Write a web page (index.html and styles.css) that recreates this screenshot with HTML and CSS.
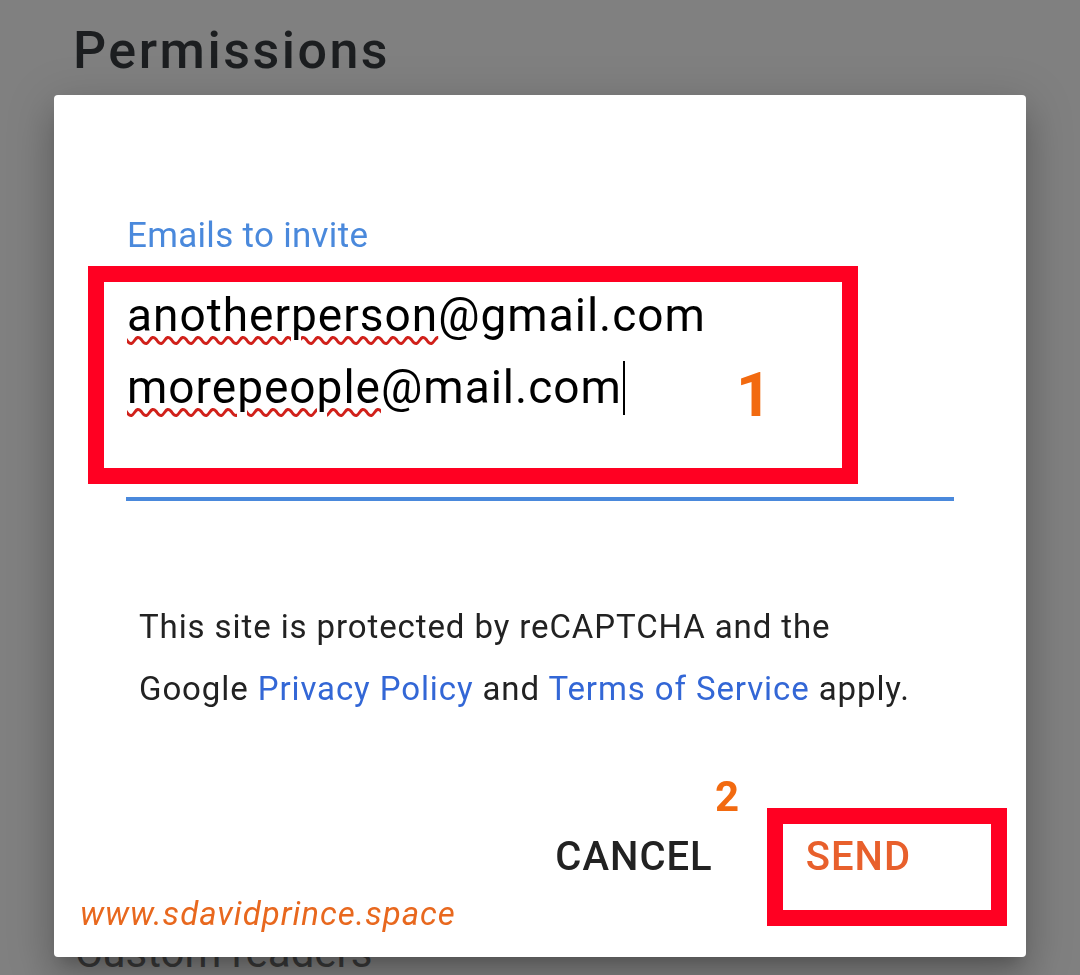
FILE: index.html
```html
<!DOCTYPE html>
<html lang="en">
<head>
<meta charset="UTF-8">
<title>Permissions - Invite readers</title>
<link rel="stylesheet" href="styles.css">
</head>
<body>

<main class="page">
  <h1 class="page-title">Permissions</h1>
  <section class="page-body"></section>
  <h2 class="section-title">Custom readers</h2>
</main>

<div class="backdrop"></div>

<div class="dialog">
  <div class="field">
    <label class="field-label" for="emails">Emails to invite</label>
    <div class="field-input" id="emails">
      <div class="email-line"><span class="misspelled">anotherperson</span>@gmail.com</div>
      <div class="email-line"><span class="misspelled">morepeople</span>@mail.com<span class="caret"></span></div>
      <!-- annotation 1 -->
      <div class="mark-box mark-box-field"></div>
      <div class="step-num step-one">1</div>
    </div>
  </div>

  <p class="recaptcha">
    This site is protected by reCAPTCHA and the<br>
    Google <a href="#">Privacy Policy</a> and <a href="#">Terms of Service</a> apply.
  </p>

  <div class="actions">
    <div class="step-num step-two">2</div>
    <button class="btn btn-cancel">CANCEL</button>
    <button class="btn btn-send">SEND
      <span class="mark-box mark-box-send"></span>
    </button>
  </div>

  <div class="watermark">www.sdavidprince.space</div>
</div>

</body>
</html>
```

FILE: styles.css
```css
* { margin: 0; padding: 0; box-sizing: border-box; }
body { font-family: Roboto, "Noto Sans", Arial, sans-serif; background-color: #808080; color: #1d1d1d; overflow: hidden; }

.page { padding: 21px 0 0 73px; height: 975px; }
.page-title { font-size: 52px; line-height: 60px; font-weight: 500; letter-spacing: 2.5px; color: #1c1e20; }
.page-body { height: 857px; }
.section-title { font-size: 42px; line-height: 30px; font-weight: 400; color: #3a3a3a; margin-left: 2px; }

.backdrop { position: fixed; inset: 0; background: transparent; }

.dialog { position: absolute; left: 54px; top: 95px; width: 972px; height: 862px; background-color: #fff; border-radius: 4px; padding: 121px 72px 0; box-shadow: 0 11px 15px -7px rgba(0,0,0,.2), 0 24px 38px 3px rgba(0,0,0,.14), 0 9px 46px 8px rgba(0,0,0,.12); }

.field-label { display: block; font-size: 35px; line-height: 40px; letter-spacing: 0.3px; color: #4a89dc; margin-left: 1px; }
.field-input { position: relative; margin-top: 23px; padding-bottom: 74px; border-bottom: 4px solid #4a89dc; }
.email-line { font-size: 46px; line-height: 72px; letter-spacing: 1px; color: #000; padding-left: 1px; }
.misspelled { text-decoration: underline wavy #d0201a; text-decoration-thickness: 3px; text-underline-offset: 5px; }
.caret { display: inline-block; width: 2px; height: 54px; background: #000; vertical-align: -12px; margin-left: 1px; }

.mark-box { position: absolute; border: 16px solid #ff0022; }
.mark-box-field { left: -38px; top: -13px; width: 770px; height: 218px; }
.mark-box-send { left: 5px; top: -25px; width: 240px; height: 118px; }

.step-num { position: absolute; color: #f26a10; font-weight: 700; }
.step-one { left: 610px; top: 80px; font-size: 62px; line-height: 72px; }
.step-two { left: 589px; top: -60px; font-size: 42px; line-height: 48px; }

.recaptcha { margin: 95px 0 0 13px; font-size: 33px; line-height: 62px; letter-spacing: 0.9px; color: #222; }
.recaptcha a { color: #3367d6; text-decoration: none; }

.actions { position: relative; display: flex; justify-content: flex-end; margin-top: 113px; }
.btn { position: relative; background: none; border: none; font-family: inherit; font-size: 40px; line-height: 48px; font-weight: 500; letter-spacing: 1px; padding: 0 46px 0 44px; cursor: pointer; }
.btn-cancel { color: #222; }
.btn-send { color: #e8602c; padding-right: 43px; margin-left: 3px; }

.watermark { position: absolute; left: 26px; bottom: 24px; font-size: 33px; letter-spacing: 1px; font-style: italic; color: #e8681e; }
```
